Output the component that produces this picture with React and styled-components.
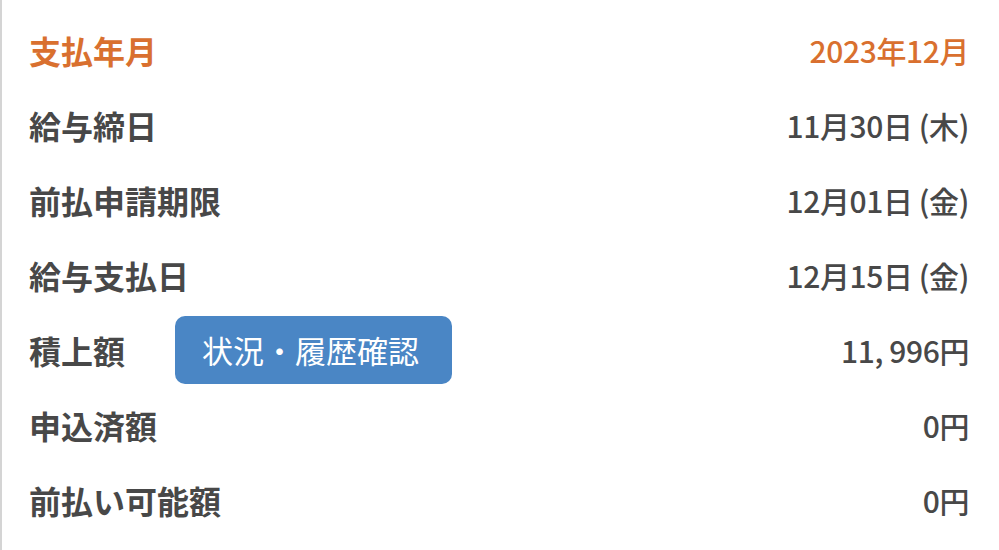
import React from "react";
import styled, { createGlobalStyle } from "styled-components";

const GlobalStyle = createGlobalStyle`
  html, body {
    margin: 0;
    padding: 0;
    background: #ffffff;
  }
  body {
    font-family: "Noto Sans CJK JP", "Noto Sans", sans-serif;
    color: #4a4a4a;
  }
`;

const rows = [
  { label: "支払年月", value: "2023年12月", accent: true },
  { label: "給与締日", value: "11月30日 (木)" },
  { label: "前払申請期限", value: "12月01日 (金)" },
  { label: "給与支払日", value: "12月15日 (金)" },
  { label: "積上額", value: "11, 996円", button: "状況・履歴確認" },
  { label: "申込済額", value: "0円" },
  { label: "前払い可能額", value: "0円" },
];

function App() {
  return (
    <>
      <GlobalStyle />
      <Panel>
        {rows.map((row) => (
          <Row key={row.label}>
            <Label $accent={row.accent}>{row.label}</Label>
            {row.button && <HistoryButton>{row.button}</HistoryButton>}
            <Value $accent={row.accent}>{row.value}</Value>
          </Row>
        ))}
      </Panel>
    </>
  );
}

const Panel = styled.div`
  box-sizing: border-box;
  width: 999px;
  height: 550px;
  border-left: 2px solid #d4d4d4;
  padding: 12px 30px 0 27px;
  display: flex;
  flex-direction: column;
`;

const Row = styled.div`
  display: flex;
  align-items: center;
  height: 75px;
`;

const Label = styled.div`
  min-width: 146px;
  font-size: 32px;
  font-weight: 700;
  line-height: 1;
  color: ${(p) => (p.$accent ? "#d9702f" : "#484848")};
`;

const Value = styled.div`
  margin-left: auto;
  font-size: 30px;
  font-weight: 500;
  line-height: 1;
  letter-spacing: -0.4px;
  white-space: pre;
  color: ${(p) => (p.$accent ? "#d9702f" : "#484848")};
`;

const HistoryButton = styled.button`
  box-sizing: border-box;
  height: 68px;
  width: 277px;
  border: 0;
  border-radius: 10px;
  background: #4a86c5;
  color: #ffffff;
  font-family: "Noto Sans CJK JP", "Noto Sans", sans-serif;
  font-size: 31px;
  font-weight: 400;
  line-height: 1;
  padding: 0 6px 0 0;
  cursor: pointer;
`;

export default App;
